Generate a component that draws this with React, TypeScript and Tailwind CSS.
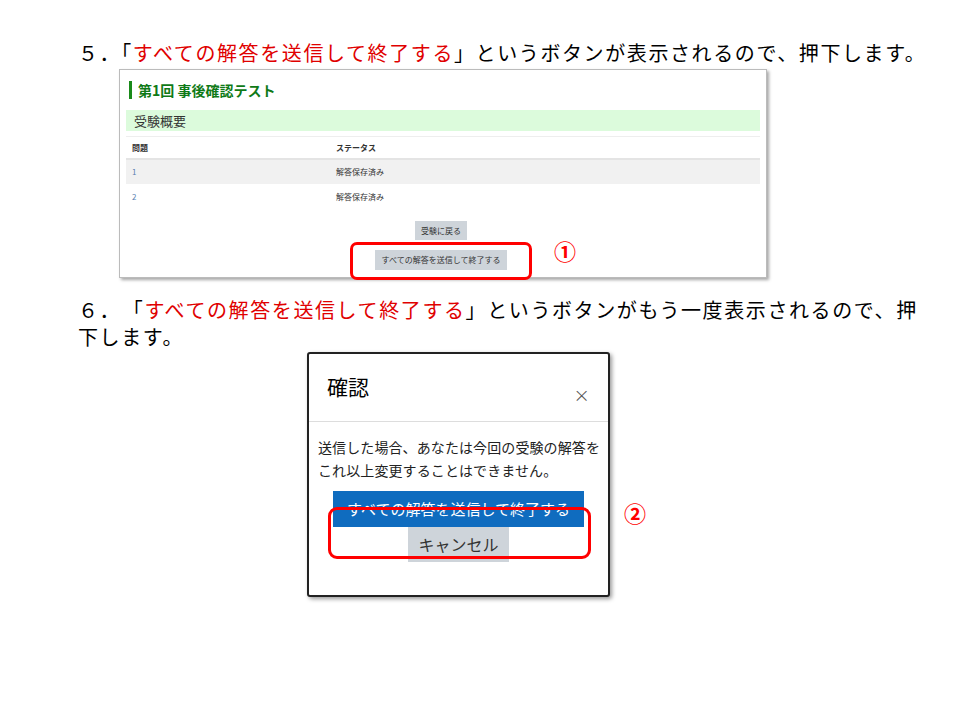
export default function App() {
  const jp = { fontFamily: '"Noto Sans CJK JP", "Noto Sans", sans-serif' };
  return (
    <div className="w-[960px] h-[720px] bg-white relative overflow-hidden text-black" style={jp}>
      <div className="pl-[78px] pt-[39px] text-[20px] leading-[28px] tracking-[1.6px] whitespace-nowrap">
        ５．「<span className="text-[#e00000]">すべての解答を送信して終了する</span>」というボタンが表示されるので、押下します。
      </div>
      <div className="ml-[119px] mt-[2px] w-[648px] h-[209px] border border-[#bbb] shadow-[2px_2px_3px_rgba(0,0,0,0.35)] relative bg-white px-[6px] pt-[10px]">
        <div className="flex items-center gap-[6px] ml-[3px]">
          <div className="w-[3px] h-[18px] bg-[#1a8a1a]" />
          <div className="text-[14px] font-bold text-[#0f7a17] leading-[20px]">第1回 事後確認テスト</div>
        </div>
        <div className="mt-[10px] bg-[#dcfbdc] h-[21px] text-[13px] leading-[21px] pl-[8px] text-[#333]">受験概要</div>
        <div className="mt-[5px] grid grid-cols-[204px_1fr] text-[8px] h-[22px] items-center pl-[6px] font-bold text-[#333] border-t border-[#eee]">
          <span>問題</span><span>ステータス</span>
        </div>
        <div className="grid grid-cols-[204px_1fr] text-[8px] h-[26px] items-center pl-[6px] bg-[#f1f1f1] border-t-2 border-[#e4e4e4]">
          <span className="text-[#5a7fb0]">1</span><span className="text-[#333]">解答保存済み</span>
        </div>
        <div className="grid grid-cols-[204px_1fr] text-[8px] h-[26px] items-center pl-[6px]">
          <span className="text-[#5a7fb0]">2</span><span className="text-[#333]">解答保存済み</span>
        </div>
        <div className="flex flex-col items-center mt-[11px] gap-[10px]">
          <div className="bg-[#ced4da] text-[8px] px-[6px] h-[19px] leading-[19px] text-[#333] ml-[-4px]">受験に戻る</div>
          <div className="bg-[#ced4da] text-[8px] px-[7px] h-[20px] leading-[20px] text-[#333] ml-[-4px]">すべての解答を送信して終了する</div>
        </div>
        <div className="absolute left-[230px] top-[172px] w-[182px] h-[38px] border-[3px] border-[#ff0000] rounded-[7px]" />
      </div>
      <div className="absolute left-[554px] top-[234px] text-[22px] font-bold text-[#ff0000]">①</div>
      <div className="pl-[78px] pr-[40px] mt-[18px] text-[20px] leading-[27px] tracking-[1.6px]">
        ６．　「<span className="text-[#e00000]">すべての解答を送信して終了する</span>」というボタンがもう一度表示されるので、押下します。
      </div>
      <div className="ml-[307px] mt-[2px] w-[303px] h-[245px] border-2 border-[#222] rounded-[3px] shadow-[2px_2px_4px_rgba(0,0,0,0.4)] bg-white relative">
        <div className="flex items-start justify-between h-[68px] border-b border-[#ddd] px-[18px] pt-[18px]">
          <span className="text-[21px] leading-[28px]">確認</span>
          <span className="text-[20px] text-[#555] mt-[8px]" style={{ fontFamily: '"DejaVu Sans", sans-serif', fontWeight: 300 }}>×</span>
        </div>
        <div className="ml-[9px] w-[284px] pt-[14px] text-[14px] tracking-[0.1px] leading-[23px] text-[#222]">
          送信した場合、あなたは今回の受験の解答をこれ以上変更することはできません。
        </div>
        <div className="flex flex-col items-center mt-[9px]">
          <div className="w-[251px] h-[36px] bg-[#0f6cbf] text-white text-[15px] leading-[36px] text-center">すべての解答を送信して終了する</div>
          <div className="w-[101px] h-[35px] bg-[#ced4da] text-[16px] leading-[35px] text-center text-[#333]">キャンセル</div>
        </div>
        <div className="absolute left-[19px] top-[153px] w-[263px] h-[52px] border-[3px] border-[#ff0000] rounded-[9px]" />
      </div>
      <div className="absolute left-[624px] top-[496px] text-[22px] font-bold text-[#ff0000]">②</div>
    </div>
  );
}
